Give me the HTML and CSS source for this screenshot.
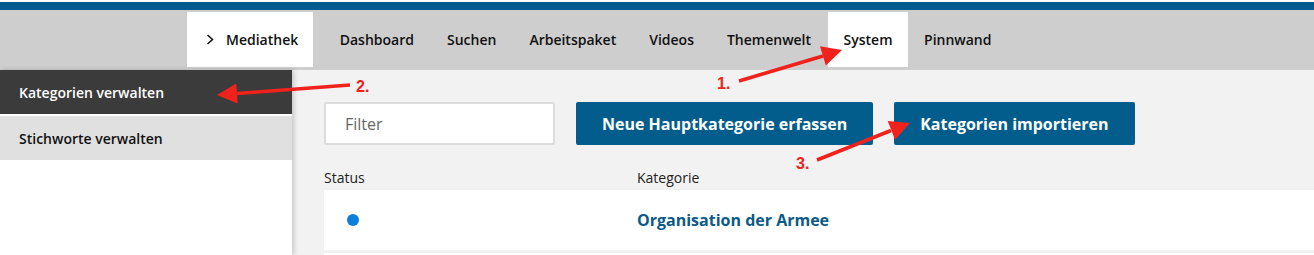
FILE: index.html
```html
<!DOCTYPE html>
<html lang="de">
<head>
  <meta charset="UTF-8" />
  <title>Mediathek - System</title>
  <link rel="stylesheet" href="styles.css">
</head>
<body>
  <div class="brand-bar"></div>

  <nav class="main-nav">
    <a class="nav-item nav-home" href="#">
      <svg class="chevron" viewBox="0 0 8 11" width="8" height="11"><path d="M1.5 1 L6.5 5.5 L1.5 10" fill="none" stroke="#111" stroke-width="1.6"/></svg>
      Mediathek
    </a>
    <a class="nav-item" href="#">Dashboard</a>
    <a class="nav-item" href="#">Suchen</a>
    <a class="nav-item" href="#">Arbeitspaket</a>
    <a class="nav-item" href="#">Videos</a>
    <a class="nav-item" href="#">Themenwelt</a>
    <a class="nav-item active" href="#">System</a>
    <a class="nav-item" href="#">Pinnwand</a>
  </nav>

  <div class="page">
    <aside class="sidebar">
      <a class="side-item active" href="#">Kategorien verwalten</a>
      <a class="side-item" href="#">Stichworte verwalten</a>
    </aside>

    <main class="content">
      <div class="toolbar">
        <input class="filter" type="text" placeholder="Filter">
        <button class="btn">Neue Hauptkategorie erfassen</button>
        <button class="btn">Kategorien importieren</button>
      </div>

      <div class="table-head">
        <div class="col-status">Status</div>
        <div class="col-name">Kategorie</div>
      </div>
      <div class="table-row">
        <div class="col-status"><span class="dot"></span></div>
        <div class="col-name"><a href="#">Organisation der Armee</a></div>
      </div>
      <div class="table-row"></div>
    </main>
  </div>

  <!-- red annotation arrows drawn over the screenshot -->
  <svg class="annotations" width="1314" height="255" viewBox="0 0 1314 255">
    <g fill="#f0221b" stroke="#f0221b">
      <line x1="739" y1="81" x2="823" y2="56" stroke-width="3.5"/>
      <polygon points="842,50 825.8,65.4 820,46.2" stroke="none"/>
      <line x1="350" y1="85" x2="237" y2="93.5" stroke-width="3.5"/>
      <polygon points="217,95 237.7,103.5 236.2,83.5" stroke="none"/>
      <line x1="817" y1="160" x2="891" y2="130.5" stroke-width="3.5"/>
      <polygon points="910,123 895.1,139.7 887.7,121.1" stroke="none"/>
    </g>
    <g class="step-num">
      <text x="717" y="89">1.</text>
      <text x="356" y="92">2.</text>
      <text x="796" y="169">3.</text>
    </g>
  </svg>
</body>
</html>
```

FILE: styles.css
```css
html, body {
  margin: 0;
  padding: 0;
  height: 100%;
  overflow: hidden;
  background: white;
  font-family: "Open Sans", "Liberation Sans", sans-serif;
  color: #111;
}

body {
  position: relative;
  display: flex;
  flex-direction: column;
}

.brand-bar {
  flex-shrink: 0;
  margin-top: 2px;
  height: 8px;
  background: #035d8c;
}

.main-nav {
  flex-shrink: 0;
  display: flex;
  height: 60px;
  box-sizing: border-box;
  padding: 2px 0 3px 187px;
  background: #cecece;
}

.nav-item {
  display: flex;
  align-items: center;
  padding: 0 16.5px;
  font-size: 14px;
  font-weight: 600;
  color: #111;
  text-decoration: none;
}

.nav-item.active {
  background: white;
  padding: 0 15px 0 16px;
}

.nav-home {
  background: white;
  padding: 0 15px 0 19px;
  margin-right: 10px;
  gap: 12px;
}

.chevron {
  display: block;
}

.page {
  flex: 1;
  min-height: 0;
  display: flex;
}

.sidebar {
  position: relative;
  z-index: 1;
  width: 292px;
  flex-shrink: 0;
  background: white;
  box-shadow: 2px 0 5px rgba(0, 0, 0, 0.18);
}

.side-item {
  display: flex;
  align-items: center;
  height: 44px;
  padding: 0 19px;
  font-size: 14px;
  font-weight: 600;
  color: #111;
  text-decoration: none;
  background: #e0e0e0;
}

.side-item.active {
  background: #3b3b3b;
  color: white;
  margin-bottom: 2px;
}

.content {
  flex: 1;
  background: #f2f2f2;
  padding: 32px 0 0 32px;
}

.toolbar {
  display: flex;
  gap: 21px;
  height: 43px;
}

.filter {
  width: 231px;
  box-sizing: border-box;
  border: 2px solid #dcdcdc;
  border-radius: 2px;
  padding: 0 19px;
  font-family: inherit;
  font-size: 16px;
  background: white;
}

.filter::placeholder {
  color: #666;
}

.btn {
  border: none;
  border-radius: 2px;
  background: #035d8c;
  color: white;
  font-family: inherit;
  font-size: 16px;
  font-weight: 700;
  padding: 0 26px;
}

.table-head {
  display: flex;
  padding: 23px 0 3px;
  font-size: 14px;
  line-height: 19px;
  color: #222;
}

.col-status {
  width: 313px;
  flex-shrink: 0;
}

.table-row {
  display: flex;
  align-items: center;
  height: 60px;
  background: white;
  margin-bottom: 3px;
}

.table-row .col-status {
  padding-left: 23px;
  box-sizing: border-box;
}

.dot {
  display: block;
  width: 12px;
  height: 12px;
  border-radius: 50%;
  background: #0b7fdc;
}

.col-name a {
  font-size: 16px;
  font-weight: 700;
  color: #0b5a87;
  text-decoration: none;
}

.annotations {
  position: absolute;
  top: 0;
  left: 0;
  pointer-events: none;
  z-index: 5;
}

.step-num text {
  fill: #f0221b;
  font-family: "Liberation Sans", Arial, sans-serif;
  font-weight: 700;
  font-size: 16px;
}
```
